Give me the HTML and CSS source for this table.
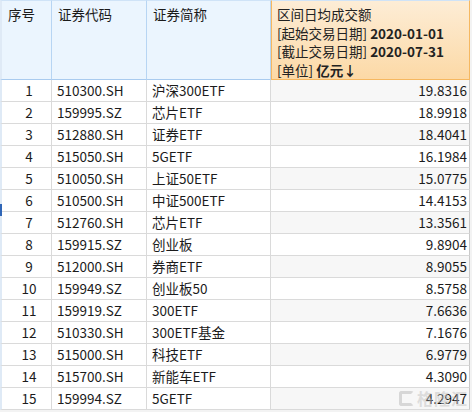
FILE: index.html
```html
<!DOCTYPE html>
<html lang="zh">
<head>
<meta charset="utf-8">
<link rel="stylesheet" href="styles.css">
</head>
<body>
<div class="sheet">
  <div class="grid">
    <div class="hc">序号</div>
    <div class="hc">证券代码</div>
    <div class="hc">证券简称</div>
    <div class="hc hot">
      <div>区间日均成交额</div>
      <div>[起始交易日期] <b>2020-01-01</b></div>
      <div>[截止交易日期] <b>2020-07-31</b></div>
      <div>[单位] <b>亿元↓</b></div>
    </div>

    <div class="c n odd">1</div><div class="c odd">510300.SH</div><div class="c odd">沪深300ETF</div><div class="c v odd">19.8316</div>
    <div class="c n">2</div><div class="c">159995.SZ</div><div class="c">芯片ETF</div><div class="c v">18.9918</div>
    <div class="c n odd">3</div><div class="c odd">512880.SH</div><div class="c odd">证券ETF</div><div class="c v odd">18.4041</div>
    <div class="c n">4</div><div class="c">515050.SH</div><div class="c">5GETF</div><div class="c v">16.1984</div>
    <div class="c n odd">5</div><div class="c odd">510050.SH</div><div class="c odd">上证50ETF</div><div class="c v odd">15.0775</div>
    <div class="c n">6</div><div class="c">510500.SH</div><div class="c">中证500ETF</div><div class="c v">14.4153</div>
    <div class="c n odd">7</div><div class="c odd">512760.SH</div><div class="c odd">芯片ETF</div><div class="c v odd">13.3561</div>
    <div class="c n">8</div><div class="c">159915.SZ</div><div class="c">创业板</div><div class="c v">9.8904</div>
    <div class="c n odd">9</div><div class="c odd">512000.SH</div><div class="c odd">券商ETF</div><div class="c v odd">8.9055</div>
    <div class="c n">10</div><div class="c">159949.SZ</div><div class="c">创业板50</div><div class="c v">8.5758</div>
    <div class="c n odd">11</div><div class="c odd">159919.SZ</div><div class="c odd">300ETF</div><div class="c v odd">7.6636</div>
    <div class="c n">12</div><div class="c">510330.SH</div><div class="c">300ETF基金</div><div class="c v">7.1676</div>
    <div class="c n odd">13</div><div class="c odd">515000.SH</div><div class="c odd">科技ETF</div><div class="c v odd">6.9779</div>
    <div class="c n">14</div><div class="c">515700.SH</div><div class="c">新能车ETF</div><div class="c v">4.3090</div>
    <div class="c n odd">15</div><div class="c odd">159994.SZ</div><div class="c odd">5GETF</div><div class="c v odd">4.2947</div>
  </div>
  <div class="mark"></div>
  <div class="wm"><span class="wm-logo"></span><span class="wm-text">格隆汇</span></div>
</div>
</body>
</html>
```

FILE: styles.css
```css
html, body {
  margin: 0;
  padding: 0;
  background: #f3f3f3;
}
.sheet {
  position: relative;
  width: 472px;
  height: 412px;
  overflow: hidden;
  background: #f3f3f3;
  font-family: "Noto Sans CJK SC", "Microsoft YaHei", sans-serif;
  font-size: 13.5px;
  color: #1b1b1b;
}
.grid {
  display: grid;
  grid-template-columns: 52px 95px 124px 199px;
  grid-template-rows: 80px repeat(16, 22px);
  width: 470px;
}
.hc {
  box-sizing: border-box;
  background: #ebf5fe;
  border-right: 1px solid #b7d5f3;
  border-bottom: 1px solid #a9cbef;
  border-top: 1px solid #cfe3f7;
  padding: 4px 0 0 6px;
  line-height: 18.7px;
}
.hc:first-child {
  padding-left: 6px;
  border-left: 2px solid #dfeaf6;
}
.hc.hot {
  background: linear-gradient(#fdedd6, #fcd9a6);
  border: 1px solid #f6b860;
  border-top: 1px solid #cfe3f7;
  padding-left: 5px;
  color: #222;
}
.hc.hot b {
  font-weight: 700;
}
.c {
  box-sizing: border-box;
  background: #ffffff;
  border-right: 1px solid #dadada;
  border-bottom: 1px solid #dadada;
  padding-left: 5px;
  line-height: 21px;
  white-space: nowrap;
}
.c.n {
  text-align: center;
  padding-left: 5px;
  border-left: 2px solid #dfeaf6;
}
.c.v {
  text-align: right;
  padding: 0 2px 0 0;
  background: #ffffff;
  border-right: 1px solid #c9c9c9;
}
.c.v.odd {
  background: #f7f7f7;
}
.mark {
  position: absolute;
  left: 0;
  top: 204px;
  width: 2px;
  height: 12px;
  background: #2f66b7;
}
.wm {
  position: absolute;
  left: 399px;
  top: 386px;
  display: flex;
  align-items: center;
  gap: 3px;
  opacity: 0.5;
  pointer-events: none;
}
.wm-logo {
  display: block;
  width: 15px;
  height: 15px;
  border: 3px solid #b9b9b9;
  border-radius: 3px;
  box-sizing: border-box;
  border-right-color: transparent;
}
.wm-text {
  font-size: 16px;
  font-weight: 700;
  color: #c2c2c2;
  letter-spacing: 1px;
}
```
